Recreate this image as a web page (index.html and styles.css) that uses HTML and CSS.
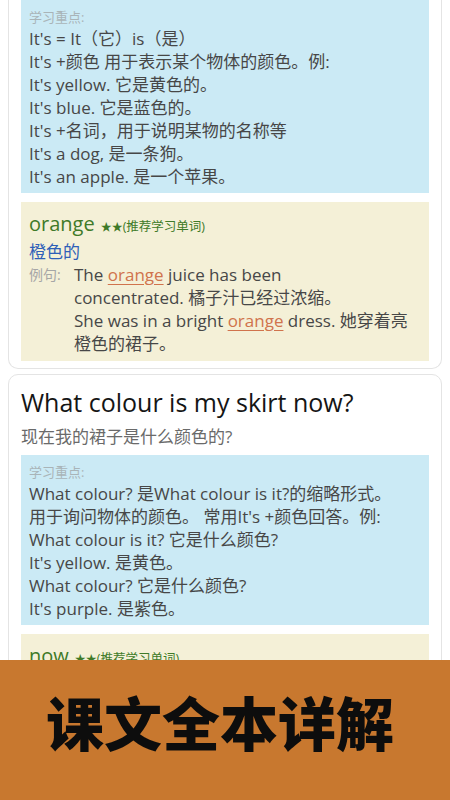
FILE: index.html
```html
<!DOCTYPE html>
<html lang="zh-CN">
<head>
<meta charset="utf-8">
<link rel="stylesheet" href="styles.css">
</head>
<body>
<div class="page">
  <div class="card card-first">
    <div class="point">
      <div class="label">学习重点:</div>
      <div class="line">It's = It（它）is（是）</div>
      <div class="line">It's +颜色 用于表示某个物体的颜色。例:</div>
      <div class="line">It's yellow. 它是黄色的。</div>
      <div class="line">It's blue. 它是蓝色的。</div>
      <div class="line">It's +名词，用于说明某物的名称等</div>
      <div class="line">It's a dog, 是一条狗。</div>
      <div class="line">It's an apple. 是一个苹果。</div>
    </div>
    <div class="word">
      <div class="word-head"><span class="w">orange</span><span class="stars">★★</span><span class="rec">(推荐学习单词)</span></div>
      <div class="mean">橙色的</div>
      <div class="ex">
        <div class="ex-label">例句:</div>
        <div class="ex-body">The <span class="hl">orange</span> juice has been<br>concentrated. 橘子汁已经过浓缩。<br>She was in a bright <span class="hl">orange</span> dress. 她穿着亮橙色的裙子。</div>
      </div>
    </div>
  </div>
  <div class="card">
    <div class="title">What colour is my skirt now?</div>
    <div class="sub">现在我的裙子是什么颜色的?</div>
    <div class="point">
      <div class="label">学习重点:</div>
      <div class="line">What colour? 是What colour is it?的缩略形式。</div>
      <div class="line">用于询问物体的颜色。 常用It's +颜色回答。例:</div>
      <div class="line">What colour is it? 它是什么颜色?</div>
      <div class="line">It's yellow. 是黄色。</div>
      <div class="line">What colour? 它是什么颜色?</div>
      <div class="line">It's purple. 是紫色。</div>
    </div>
    <div class="word">
      <div class="word-head"><span class="w">now</span><span class="stars">★★</span><span class="rec">(推荐学习单词)</span></div>
      <div class="mean">现在</div>
      <div class="ex">
        <div class="ex-label">例句:</div>
        <div class="ex-body">What colour is my skirt <span class="hl">now</span>? 现在我的裙子是什么颜色的?</div>
      </div>
    </div>
  </div>
</div>
<div class="banner">课文全本详解</div>
</body>
</html>
```
FILE: styles.css
```css
html, body {
  margin: 0;
  padding: 0;
  background: #ffffff;
  width: 450px;
  height: 800px;
  overflow: hidden;
  font-family: "Open Sans", "Noto Sans CJK SC", sans-serif;
}
.page {
  padding: 0 8px;
}
.card {
  border: 1px solid #e4e4e4;
  border-radius: 10px;
  padding: 0 12px 7px;
  margin-bottom: 5px;
  background: #fff;
}
.card-first {
  border-top: none;
  border-radius: 0 0 10px 10px;
}
.point {
  background: #cbeaf5;
  padding: 7px 8px 5px;
  color: #474747;
  font-size: 17px;
  line-height: 23px;
}
.label {
  font-size: 13px;
  line-height: 20px;
  color: #a9b4b8;
}
.word {
  margin-top: 9px;
  background: #f4f0d7;
  padding: 9px 8px 6px;
  color: #474747;
  font-size: 17px;
  line-height: 23px;
}
.word-head {
  line-height: 26px;
  color: #3f7a28;
}
.w {
  font-size: 20px;
}
.stars {
  font-size: 11px;
  margin-left: 6px;
}
.rec {
  font-size: 12.5px;
}
.mean {
  color: #2f5fb8;
  font-size: 17px;
}
.ex {
  display: flex;
}
.ex-label {
  width: 45px;
  flex: none;
  color: #a6a6a6;
  font-size: 14px;
}
.ex-body {
  flex: 1;
}
.hl {
  color: #d0734c;
  text-decoration: underline;
  text-underline-offset: 3px;
}
.title {
  margin-top: 12px;
  font-size: 25px;
  line-height: 30px;
  color: #151515;
}
.sub {
  margin-top: 8px;
  font-size: 17px;
  line-height: 23px;
  color: #6a6a6a;
  margin-bottom: 7px;
}
.banner {
  position: fixed;
  left: 0;
  right: 0;
  bottom: 0;
  height: 140px;
  background: #c8782f;
  color: #0d0d0d;
  font-size: 58px;
  font-weight: 900;
  font-family: "Noto Sans CJK SC", sans-serif;
  display: flex;
  align-items: center;
  justify-content: center;
  padding: 0 10px 18px 0;
  box-sizing: border-box;
}
```
